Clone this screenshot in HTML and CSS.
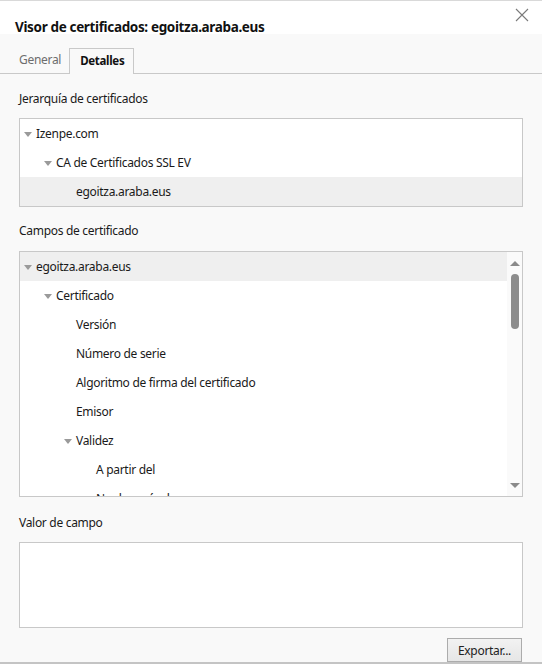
FILE: index.html
```html
<!DOCTYPE html>
<html lang="es">
<head>
<meta charset="utf-8">
<title>Visor de certificados</title>
<link rel="stylesheet" href="styles.css">
</head>
<body>
<div class="dialog">
  <header class="titlebar">
    <h1 class="title">Visor de certificados: egoitza.araba.eus</h1>
    <button class="close" aria-label="Cerrar">
      <svg width="14" height="14" viewBox="0 0 14 14"><path d="M1 1L13 13M13 1L1 13" stroke="#7a7a7a" stroke-width="1.1" fill="none"/></svg>
    </button>
  </header>
  <main class="content">
    <nav class="tabs">
      <span class="tab">General</span>
      <span class="tab active">Detalles</span>
    </nav>
    <section class="panel">
      <div class="label label-first">Jerarquía de certificados</div>
      <div class="box hierarchy">
        <div class="row lvl0"><span class="twisty"></span>Izenpe.com</div>
        <div class="row lvl1"><span class="twisty"></span>CA de Certificados SSL EV</div>
        <div class="row lvl2 selected">egoitza.araba.eus</div>
      </div>
      <div class="label label-second">Campos de certificado</div>
      <div class="box fields">
        <div class="rows">
          <div class="row lvl0 selected"><span class="twisty"></span>egoitza.araba.eus</div>
          <div class="row lvl1"><span class="twisty"></span>Certificado</div>
          <div class="row lvl2">Versión</div>
          <div class="row lvl2">Número de serie</div>
          <div class="row lvl2">Algoritmo de firma del certificado</div>
          <div class="row lvl2">Emisor</div>
          <div class="row lvl2"><span class="twisty"></span>Validez</div>
          <div class="row lvl3">A partir del</div>
          <div class="row lvl3">No después de</div>
        </div>
        <div class="scrollbar">
          <span class="arrow up"></span>
          <span class="thumb"></span>
          <span class="track"></span>
          <span class="arrow down"></span>
        </div>
      </div>
      <div class="label label-third">Valor de campo</div>
      <div class="box value"></div>
      <div class="actions">
        <button class="btn">Exportar...</button>
      </div>
    </section>
  </main>
</div>
</body>
</html>
```
FILE: styles.css
```css
* { box-sizing: border-box; }
html, body { margin: 0; padding: 0; }
body {
  width: 542px;
  height: 664px;
  overflow: hidden;
  background: #f9f9f9;
  font-family: "Noto Sans", "Open Sans", sans-serif;
  font-size: 12px;
  letter-spacing: -0.3px;
  color: #1a1a1a;
}
.dialog {
  height: 664px;
  display: flex;
  flex-direction: column;
  border-bottom: 2px solid #c4c4c4;
}
.titlebar {
  height: 34px;
  background: #fff;
  border-top: 1px solid #d9d9d9;
  display: flex;
  align-items: flex-start;
  justify-content: space-between;
  padding-left: 15px;
}
.title {
  margin: 0;
  margin-top: 17px;
  font-size: 13.5px;
  letter-spacing: -0.35px;
  line-height: 18px;
  font-weight: 700;
  color: #111;
}
.close {
  margin: 7px 13px 0 0;
  padding: 0;
  border: 0;
  background: none;
  width: 14px;
  height: 14px;
  display: flex;
}
.content { flex: 1; display: flex; flex-direction: column; }
.tabs {
  height: 40px;
  display: flex;
  align-items: flex-end;
  padding-left: 9px;
  border-bottom: 1px solid #c9c9c9;
}
.tab {
  height: 25px;
  line-height: 24px;
  padding: 0 8px 0 10px;
  color: #6d6d6d;
  font-size: 12px;
}
.tab.active {
  color: #111;
  font-weight: 700;
  font-size: 11.5px;
  border: 1px solid #c9c9c9;
  border-bottom: 0;
  margin-bottom: -1px;
  height: 26px;
  background: #f9f9f9;
  padding: 0 9px 0 10px;
}
.panel {
  padding: 0 19px;
  display: flex;
  flex-direction: column;
}
.label {
  height: 16px;
  line-height: 16px;
  color: #1a1a1a;
}
.label-first { margin-top: 17px; margin-bottom: 11px; }
.label-second { margin-top: 16px; margin-bottom: 12px; }
.label-third { margin-top: 18px; margin-bottom: 11px; }
.box {
  width: 504px;
  background: #fff;
  border: 1px solid #c8c8c8;
}
.hierarchy { height: 89px; }
.fields {
  height: 246px;
  display: flex;
  overflow: hidden;
}
.rows { flex: 1; overflow: hidden; }
.row {
  height: 29px;
  line-height: 29px;
  display: flex;
  align-items: center;
  white-space: nowrap;
}
.row.selected { background: #efefef; }
.lvl0 { padding-left: 4px; }
.lvl1 { padding-left: 24px; }
.lvl2 { padding-left: 56px; }
.lvl3 { padding-left: 76px; }
.lvl2:has(.twisty) { padding-left: 44px; }
.twisty {
  width: 0;
  height: 0;
  border-left: 4px solid transparent;
  border-right: 4px solid transparent;
  border-top: 5px solid #9a9a9a;
  margin-right: 4px;
  margin-top: 1px;
}
.scrollbar {
  width: 15px;
  background: #fafafa;
  display: flex;
  flex-direction: column;
  align-items: center;
}
.arrow {
  width: 0;
  height: 0;
  border-left: 5px solid transparent;
  border-right: 5px solid transparent;
}
.arrow.up { border-bottom: 5px solid #8a8a8a; margin-top: 9px; }
.arrow.down { border-top: 5px solid #8a8a8a; margin-bottom: 8px; }
.thumb {
  width: 8px;
  height: 55px;
  margin-top: 8px;
  border-radius: 4px;
  background: #8c8c8c;
}
.track { flex: 1; }
.value { height: 86px; }
.actions {
  display: flex;
  justify-content: flex-end;
  margin-top: 10px;
  padding-right: 1px;
}
.btn {
  width: 75px;
  height: 24px;
  padding: 0;
  border: 1px solid #acacac;
  background: linear-gradient(#f2f2f2, #e6e6e6);
  font-family: inherit;
  font-size: 12px;
  letter-spacing: -0.3px;
  color: #222;
}
```
